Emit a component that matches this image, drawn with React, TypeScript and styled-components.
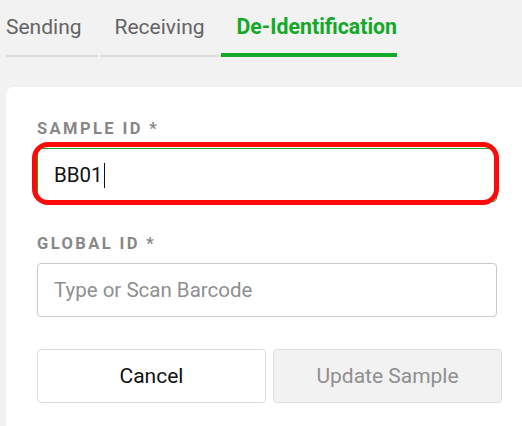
import React from "react";
import styled, { createGlobalStyle } from "styled-components";

const GlobalStyle = createGlobalStyle`
  html, body {
    margin: 0;
    padding: 0;
    background: #f2f2f2;
    font-family: Roboto, "Liberation Sans", Arial, sans-serif;
  }
  * { box-sizing: border-box; }
`;

const Page = styled.div`
  width: 522px;
  height: 426px;
  overflow: hidden;
  background: #f2f2f2;
  padding-left: 6px;
`;

const TabBar = styled.div`
  display: flex;
  align-items: flex-end;
  height: 57px;
`;

const Tab = styled.div<{ $active?: boolean; $pl: number; $pr: number; $mr?: number }>`
  font-size: ${(p) => (p.$active ? 21.3 : 21)}px;
  line-height: 24px;
  font-weight: ${(p) => (p.$active ? 700 : 400)};
  color: ${(p) => (p.$active ? "#14a829" : "#646464")};
  padding: 15px ${(p) => p.$pr}px ${(p) => (p.$active ? 14 : 16)}px ${(p) => p.$pl}px;
  margin-right: ${(p) => p.$mr ?? 0}px;
  border-bottom: ${(p) => (p.$active ? "4px solid #14a829" : "2px solid #dcdcdc")};
  white-space: nowrap;
`;

const Card = styled.div`
  margin-top: 30px;
  background: #ffffff;
  border-top-left-radius: 8px;
  padding: 32px 20px 40px 31px;
  height: 360px;
`;

const Field = styled.div<{ $mb: number }>`
  display: flex;
  flex-direction: column;
  gap: 9px;
  width: 460px;
  margin-bottom: ${(p) => p.$mb}px;
`;

const Label = styled.div`
  font-size: 16.5px;
  line-height: 20px;
  font-weight: 700;
  letter-spacing: 2.4px;
  color: #878787;
`;

const Highlight = styled.div`
  position: relative;
  &::after {
    content: "";
    position: absolute;
    top: -6px;
    left: -5px;
    right: -2px;
    bottom: -3px;
    border: 5px solid #ff0a0a;
    border-radius: 16px;
    pointer-events: none;
  }
`;

const InputBox = styled.div<{ $focused?: boolean }>`
  height: 54px;
  display: flex;
  align-items: center;
  padding: 0 16px;
  background: #fff;
  border: 1px solid ${(p) => (p.$focused ? "#14a829" : "#c9c9c9")};
  border-radius: 4px;
  font-size: 20.5px;
`;

const Value = styled.span`
  color: #111;
`;

const Caret = styled.span`
  display: inline-block;
  width: 1.5px;
  height: 25px;
  margin-left: 1px;
  background: #111;
`;

const Placeholder = styled.span`
  color: #8f8f8f;
`;

const Buttons = styled.div`
  display: grid;
  grid-template-columns: 229px 229px;
  gap: 7px;
`;

const Button = styled.button<{ $disabled?: boolean }>`
  height: 54px;
  border: 1.5px solid #dedede;
  border-radius: 4px;
  background: ${(p) => (p.$disabled ? "#f2f2f2" : "#ffffff")};
  color: ${(p) => (p.$disabled ? "#8f8f8f" : "#111111")};
  font-family: Roboto, "Liberation Sans", Arial, sans-serif;
  font-size: 21px;
  padding: 0;
`;

export default function App() {
  return (
    <>
      <GlobalStyle />
      <Page>
        <TabBar>
          <Tab $pl={0} $pr={16} $mr={2}>Sending</Tab>
          <Tab $pl={15} $pr={16}>Receiving</Tab>
          <Tab $active $pl={16} $pr={0}>De-Identification</Tab>
        </TabBar>
        <Card>
          <Field $mb={32}>
            <Label>SAMPLE ID *</Label>
            <Highlight>
              <InputBox $focused>
                <Value>BB01</Value>
                <Caret />
              </InputBox>
            </Highlight>
          </Field>
          <Field $mb={32}>
            <Label>GLOBAL ID *</Label>
            <InputBox>
              <Placeholder>Type or Scan Barcode</Placeholder>
            </InputBox>
          </Field>
          <Buttons>
            <Button>Cancel</Button>
            <Button $disabled>Update Sample</Button>
          </Buttons>
        </Card>
      </Page>
    </>
  );
}
